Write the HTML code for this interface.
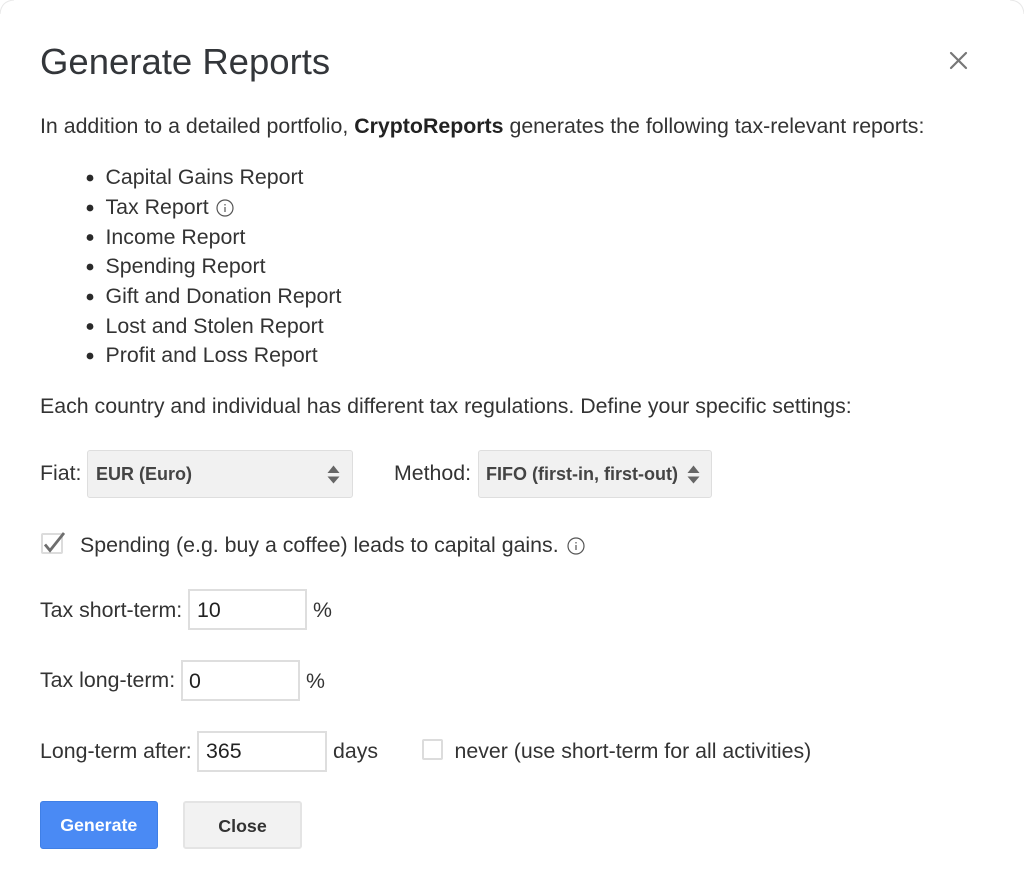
<!DOCTYPE html>
<html><head><meta charset="utf-8"><style>
html,body{margin:0;padding:0;background:#fff}
body{width:1024px;height:891px;position:relative;overflow:hidden;font-family:"Liberation Sans",sans-serif;color:#333;font-size:21.33px}
#w{position:absolute;left:0;top:0;width:1024px;height:891px;filter:blur(0.35px)}
.t{position:absolute;white-space:nowrap;line-height:24px}
.box{position:absolute;box-sizing:border-box}
.sel{background:#f1f1f1;border:1.5px solid #dedede;border-radius:3px;height:48px;top:450px}
.b{font-weight:bold;font-size:18px;color:#444}
.inp{background:#fff;border:2px solid #dedede;height:41px}
.btn{height:48px;top:801px;border-radius:3px;text-align:center;line-height:46px;font-weight:bold;font-size:17.8px}
svg{position:absolute;overflow:visible}
</style></head><body><div id="w">
<svg style="left:0;top:0" width="1024" height="891" fill="none" stroke="#e8e8e8" stroke-width="1"><path d="M0 14Q1 1 14 0M1010 0Q1023 1 1024 14"/></svg>
<div class="t" style="left:40px;top:41px;font-size:36.5px;line-height:42px;color:#33363a">Generate Reports</div>
<div class="t" style="left:40px;top:114px">In addition to a detailed portfolio, <b style="color:#222">CryptoReports</b> generates the following tax-relevant reports:</div>
<svg style="left:950px;top:52px" width="17" height="17" stroke="#777" stroke-width="2.200" stroke-linecap="round"><path d="M1 1L16 16M16 1L1 16"/></svg>
<svg style="left:0;top:0" width="120" height="370" fill="#2a2a2a"><circle cx="90" cy="178" r="3.400"/><circle cx="90" cy="208" r="3.400"/><circle cx="90" cy="237.500" r="3.400"/><circle cx="90" cy="267" r="3.400"/><circle cx="90" cy="297" r="3.400"/><circle cx="90" cy="326.500" r="3.400"/><circle cx="90" cy="356" r="3.400"/></svg>
<div class="t" style="left:105.500px;top:165px">Capital Gains Report</div>
<div class="t" style="left:105.500px;top:195px">Tax Report</div>
<svg style="left:216px;top:199px" width="18" height="18" fill="none" stroke="#555" stroke-width="1.200"><circle cx="9" cy="9" r="8"/><path d="M9 8V13M9 5V6.500"/></svg>
<div class="t" style="left:105.500px;top:225px">Income Report</div>
<div class="t" style="left:105.500px;top:254px">Spending Report</div>
<div class="t" style="left:105.500px;top:284px">Gift and Donation Report</div>
<div class="t" style="left:105.500px;top:314px">Lost and Stolen Report</div>
<div class="t" style="left:105.500px;top:343px">Profit and Loss Report</div>
<div class="t" style="left:40px;top:394px">Each country and individual has different tax regulations. Define your specific settings:</div>
<div class="t" style="left:40px;top:461px">Fiat:</div>
<div class="box sel" style="left:87px;width:266px"></div>
<div class="t b" style="left:96px;top:462px">EUR (Euro)</div>
<svg style="left:327px;top:465px" width="14" height="20" fill="#666"><path d="M0.500 8L6.500 0.500L12.500 8ZM0.500 11.500H12.500L6.500 18.500Z"/></svg>
<div class="t" style="left:394px;top:461px">Method:</div>
<div class="box sel" style="left:478px;width:234px"></div>
<div class="t b" style="left:486px;top:462px">FIFO (first-in, first-out)</div>
<svg style="left:687px;top:465px" width="14" height="20" fill="#666"><path d="M0.500 8L6.500 0.500L12.500 8ZM0.500 11.500H12.500L6.500 18.500Z"/></svg>
<div class="box" style="left:41px;top:533px;width:22px;height:21px;border:2px solid #dcdcdc;border-radius:2px"></div>
<svg style="left:41px;top:531px" width="26" height="24" fill="none" stroke="#6e6e6e" stroke-width="2.800"><path d="M4 13.500L9 19.500L23 2"/></svg>
<div class="t" style="left:80px;top:533px">Spending (e.g. buy a coffee) leads to capital gains.</div>
<svg style="left:567px;top:537px" width="18" height="18" fill="none" stroke="#555" stroke-width="1.200"><circle cx="9" cy="9" r="8"/><path d="M9 8V13M9 5V6.500"/></svg>
<div class="t" style="left:40px;top:598px">Tax short-term:</div>
<div class="box inp" style="left:188px;top:589px;width:119px"></div>
<div class="t" style="left:197px;top:598px;color:#222">10</div>
<div class="t" style="left:313px;top:598px">%</div>
<div class="t" style="left:40px;top:668px">Tax long-term:</div>
<div class="box inp" style="left:181px;top:660px;width:119px"></div>
<div class="t" style="left:189px;top:669px;color:#222">0</div>
<div class="t" style="left:306px;top:669px">%</div>
<div class="t" style="left:40px;top:739px">Long-term after:</div>
<div class="box inp" style="left:197px;top:731px;width:130px"></div>
<div class="t" style="left:206px;top:739px;color:#222">365</div>
<div class="t" style="left:333px;top:739px">days</div>
<div class="box" style="left:422px;top:739px;width:21px;height:21px;border:2px solid #dcdcdc;border-radius:2px"></div>
<div class="t" style="left:454.500px;top:739px">never (use short-term for all activities)</div>
<div class="box btn" style="left:39.500px;width:118.500px;background:#4a8af4;border:1px solid #3f7fe6;color:#fff">Generate</div>
<div class="box btn" style="left:183px;width:119px;background:#f2f2f2;border:2px solid #e4e4e4;color:#333">Close</div>
</div></body></html>
